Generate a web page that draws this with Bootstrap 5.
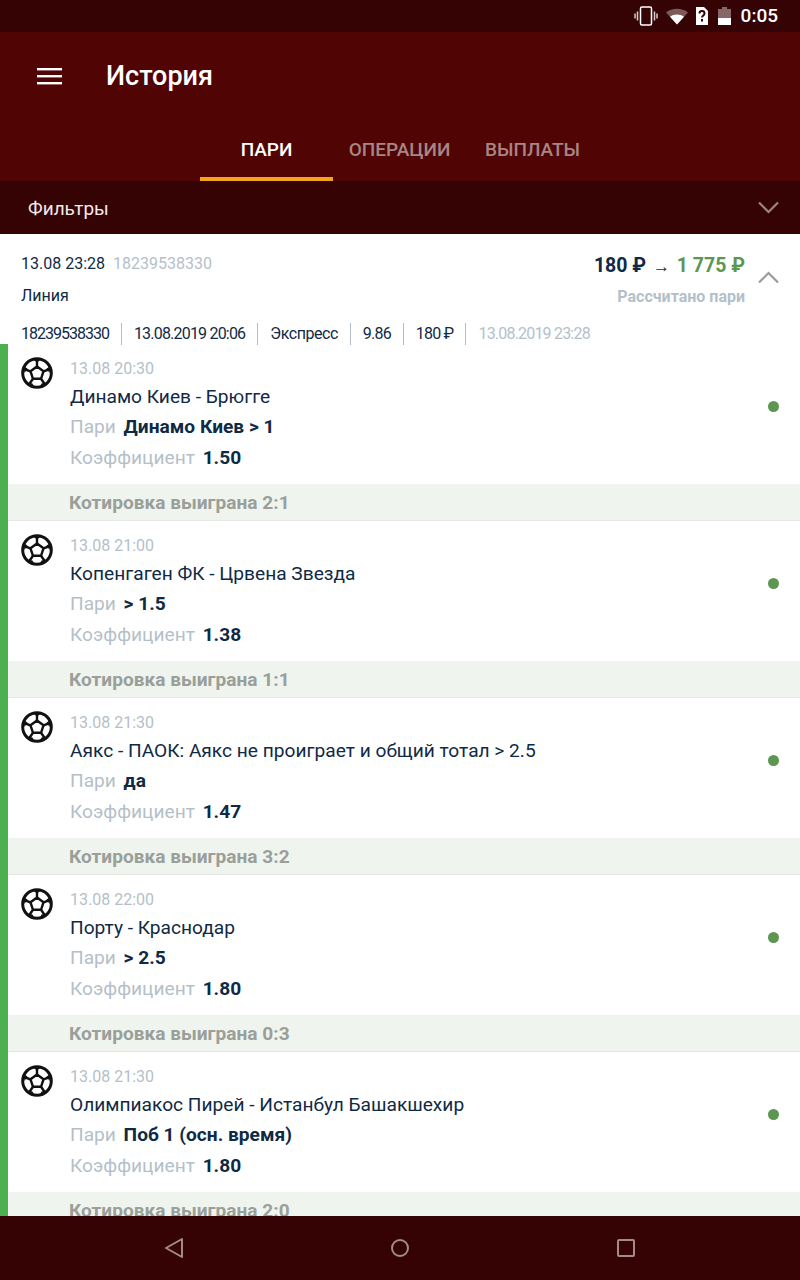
<!DOCTYPE html>
<html lang="ru">
<head>
  <meta charset="UTF-8" />
  <meta name="viewport" content="width=device-width, initial-scale=1.0" />
  <title>История</title>
  <link href="https://cdn.jsdelivr.net/npm/bootstrap@5.3.2/dist/css/bootstrap.min.css" rel="stylesheet">
  <style>
    html, body { height: 1280px; overflow: hidden; }
    body { font-family: Roboto, "Liberation Sans", sans-serif; color: #0f2a45; background: #fff; }
    .screen { height: 1280px; }
    .status-bar { height: 32px; background: #360304; color: #fff; padding-right: 22px; flex: none; }
    .st-wifi { margin-left: 7px; }
    .st-sim { margin-left: 6px; }
    .st-batt { margin-left: 9px; }
    .status-time { font-size: 19px; font-weight: 500; margin-left: 10px; }
    .app-bar { height: 149px; background: #500404; flex: none; }
    .app-top { height: 88px; padding-left: 37px; }
    .app-title { font-size: 27px; font-weight: 500; color: #fff; margin-left: 44px; margin-bottom: 0; }
    .tabs-row { height: 61px; padding-left: 200px; }
    .tab-item { width: 133px; font-size: 19px; font-weight: 500; color: #a98585; height: 61px; line-height: 60px; text-align: center; }
    .tab-item.on { color: #fff; border-bottom: 4px solid #f5a31a; }
    .filter-bar { height: 53px; background: #360304; color: #f3eaea; font-size: 19px; padding: 0 21px 0 28px; flex: none; }
    .filter-label { margin-top: 4px; }
    .bet-head { height: 110px; padding: 0 21px; position: relative; flex: none; }
    .head-line { font-size: 16px; line-height: 19px; }
    .muted-id { color: #b4bfc9; margin-left: 4px; }
    .head-left { padding-top: 20px; }
    .type-line { font-size: 16px; line-height: 19px; margin-top: 13px; }
    .head-right { padding: 19px 34px 0 0; text-align: right; }
    .sum-line { font-size: 19.500px; font-weight: 700; line-height: 26px; }
    .sum-win { color: #5d9651; }
    .sum-arrow { font-size: 17px; font-weight: 400; margin: 0 2px; }
    .calc-line { font-size: 16px; font-weight: 700; line-height: 19px; color: #b4bfc9; margin-top: 8px; }
    .chev-up { position: absolute; right: 21px; top: 37px; }
    .meta-line { position: absolute; left: 21px; top: 89px; font-size: 16px; letter-spacing: -.8px; line-height: 22px; white-space: nowrap; }
    .meta-line span { padding-right: 12px; margin-right: 12px; border-right: 1px solid #b4bfc9; display: inline-block; }
    .meta-line span:nth-child(1) { letter-spacing: -1px; }
    .meta-line span:nth-child(3) { letter-spacing: -.45px; }
    .meta-line span:last-child { border: 0; color: #b4bfc9; }
    .bets-wrap { flex: 1 1 0; min-height: 0; overflow: hidden; border-left: 8px solid #4caf50; }
    .bet-row { height: 140px; padding: 13px 21px 0 13px; }
    .ball-col { width: 49px; flex: none; }
    .bet-date { font-size: 16px; color: #b4bfc9; line-height: 24px; }
    .bet-name { font-size: 19.150px; line-height: 32px; margin-bottom: -2px; }
    .bet-line { font-size: 19.150px; line-height: 31px; color: #b4bfc9; }
    .bet-line b { color: #0f2a45; font-weight: 700; margin-left: 3px; }
    .dot-col { align-self: center; width: 11px; height: 11px; border-radius: 50%; background: #5d9651; margin-top: -28px; flex: none; }
    .score-bar { height: 37px; background: #eff4ee; border-bottom: 1px solid #e4e8e3; color: #9a9f9a; font-size: 19.100px; font-weight: 700; line-height: 38px; padding-left: 61px; white-space: nowrap; }
    .nav-bar { height: 64px; background: #360304; flex: none; padding: 0 164px; }
  </style>
</head>
<body>
  <div class="screen d-flex flex-column">
    <div class="status-bar d-flex align-items-center justify-content-end">
      <svg width="24" height="20" viewBox="0 0 24 20" fill="none" stroke="#fff" stroke-width="1.500"><rect x="6.500" y="1" width="11" height="18" rx="1.500"/><path d="M3.500 5.500v9M1 7.500v5M20.500 5.500v9M23 7.500v5" stroke-opacity=".8"/></svg>
      <svg class="st-wifi" width="24" height="18" viewBox="0 0 24 18"><path d="M1 5.500C7 .5 17 .5 23 5.500L12 17.500Z" fill="#fff" fill-opacity=".35"/><path d="M5 9.800C9 6.800 15 6.800 19 9.800L12 17.500Z" fill="#fff"/></svg>
      <svg class="st-sim" width="14" height="20" viewBox="0 0 14 20"><path d="M1 1h8l4 4v14H1Z" fill="#fff"/><path d="M4.500 7.500c0-3.300 5-3.300 5 0 0 2-2.500 2-2.500 4M7 13v2.500" fill="none" stroke="#360304" stroke-width="2"/></svg>
      <svg class="st-batt" width="13" height="18" viewBox="0 0 13 18"><path d="M4 0h5v2h4v16H0V2h4Z" fill="#fff" fill-opacity=".4"/><rect y="11" width="13" height="7" fill="#fff"/></svg>
      <span class="status-time">0:05</span>
    </div>

    <div class="app-bar">
      <div class="app-top d-flex align-items-center">
        <svg width="25" height="17" viewBox="0 0 25 17" fill="#fff"><rect width="25" height="2.400" y="0"/><rect width="25" height="2.400" y="7"/><rect width="25" height="2.400" y="14"/></svg>
        <h1 class="app-title">История</h1>
      </div>
      <div class="tabs-row d-flex">
        <div class="tab-item on">ПАРИ</div>
        <div class="tab-item">ОПЕРАЦИИ</div>
        <div class="tab-item">ВЫПЛАТЫ</div>
      </div>
    </div>

    <div class="filter-bar d-flex align-items-center justify-content-between">
      <span class="filter-label">Фильтры</span>
      <svg width="21" height="13" viewBox="0 0 21 13" fill="none" stroke="#9b8585" stroke-width="2.200"><path d="M1 1.500 10.500 11 20 1.500"/></svg>
    </div>

    <div class="bet-head d-flex justify-content-between">
      <div class="head-left">
        <div class="head-line">13.08 23:28 <span class="muted-id">18239538330</span></div>
        <div class="type-line">Линия</div>
      </div>
      <div class="head-right">
        <div class="sum-line">180 ₽ <span class="sum-arrow">→</span> <span class="sum-win">1 775 ₽</span></div>
        <div class="calc-line">Рассчитано пари</div>
      </div>
      <svg class="chev-up" width="21" height="13" viewBox="0 0 21 13" fill="none" stroke="#9a9a9a" stroke-width="2.200"><path d="M1 11.500 10.500 2 20 11.500"/></svg>
      <div class="meta-line">
        <span>18239538330</span><span>13.08.2019 20:06</span><span>Экспресс</span><span>9.86</span><span>180 ₽</span><span>13.08.2019 23:28</span>
      </div>
    </div>

    <div class="bets-wrap" id="bets"></div>

    <div class="nav-bar d-flex align-items-center justify-content-between">
      <svg width="20" height="22" viewBox="0 0 20 22" fill="none" stroke="#a58a8b" stroke-width="2"><path d="M18 2 2 11l16 9Z" stroke-linejoin="round"/></svg>
      <svg width="20" height="20" viewBox="0 0 20 20" fill="none" stroke="#a58a8b" stroke-width="2"><circle cx="10" cy="10" r="8"/></svg>
      <svg width="20" height="20" viewBox="0 0 20 20" fill="none" stroke="#a58a8b" stroke-width="2"><rect x="2" y="2" width="16" height="16" rx="1"/></svg>
    </div>
  </div>

  <script>
    const bets = [
      { date: "13.08 20:30", name: "Динамо Киев - Брюгге", pick: "Динамо Киев > 1", odds: "1.50", score: "2:1" },
      { date: "13.08 21:00", name: "Копенгаген ФК - Црвена Звезда", pick: "> 1.5", odds: "1.38", score: "1:1" },
      { date: "13.08 21:30", name: "Аякс - ПАОК: Аякс не проиграет и общий тотал > 2.5", pick: "да", odds: "1.47", score: "3:2" },
      { date: "13.08 22:00", name: "Порту - Краснодар", pick: "> 2.5", odds: "1.80", score: "0:3" },
      { date: "13.08 21:30", name: "Олимпиакос Пирей - Истанбул Башакшехир", pick: "Поб 1 (осн. время)", odds: "1.80", score: "2:0" }
    ];

    // футбольный мяч
    const ball = `<svg width="32" height="32" viewBox="0 0 32 32" fill="none" stroke="#111" stroke-width="2.400">
      <circle cx="16" cy="16" r="14.300" stroke-width="3"/>
      <path d="M16 9.500 22.500 14.300 20 21.800H12L9.500 14.300Z" stroke-linejoin="round"/>
      <path d="M16 9.500V3M22.500 14.300 29 12M20 21.800 24 27.500M12 21.800 8 27.500M9.500 14.300 3 12"/>
      <path d="M12 2.500h8l-4 3ZM29.500 9l-1 7-3-4.500ZM26 25.500l-7 4 1.500-3ZM6 25.500l7 4-1.500-3ZM2.500 9l1 7 3-4.500Z" fill="#111" stroke="none"/>
    </svg>`;

    document.getElementById("bets").innerHTML = bets.map(b => `
      <div class="bet-row d-flex">
        <div class="ball-col">${ball}</div>
        <div class="flex-grow-1">
          <div class="bet-date">${b.date}</div>
          <div class="bet-name">${b.name}</div>
          <div class="bet-line">Пари <b>${b.pick.replace(">", "&gt;")}</b></div>
          <div class="bet-line">Коэффициент <b>${b.odds}</b></div>
        </div>
        <div class="dot-col"></div>
      </div>
      <div class="score-bar">Котировка выиграна ${b.score}</div>`).join("");
  </script>
  <script src="https://cdn.jsdelivr.net/npm/bootstrap@5.3.2/dist/js/bootstrap.bundle.min.js"></script>
</body>
</html>
